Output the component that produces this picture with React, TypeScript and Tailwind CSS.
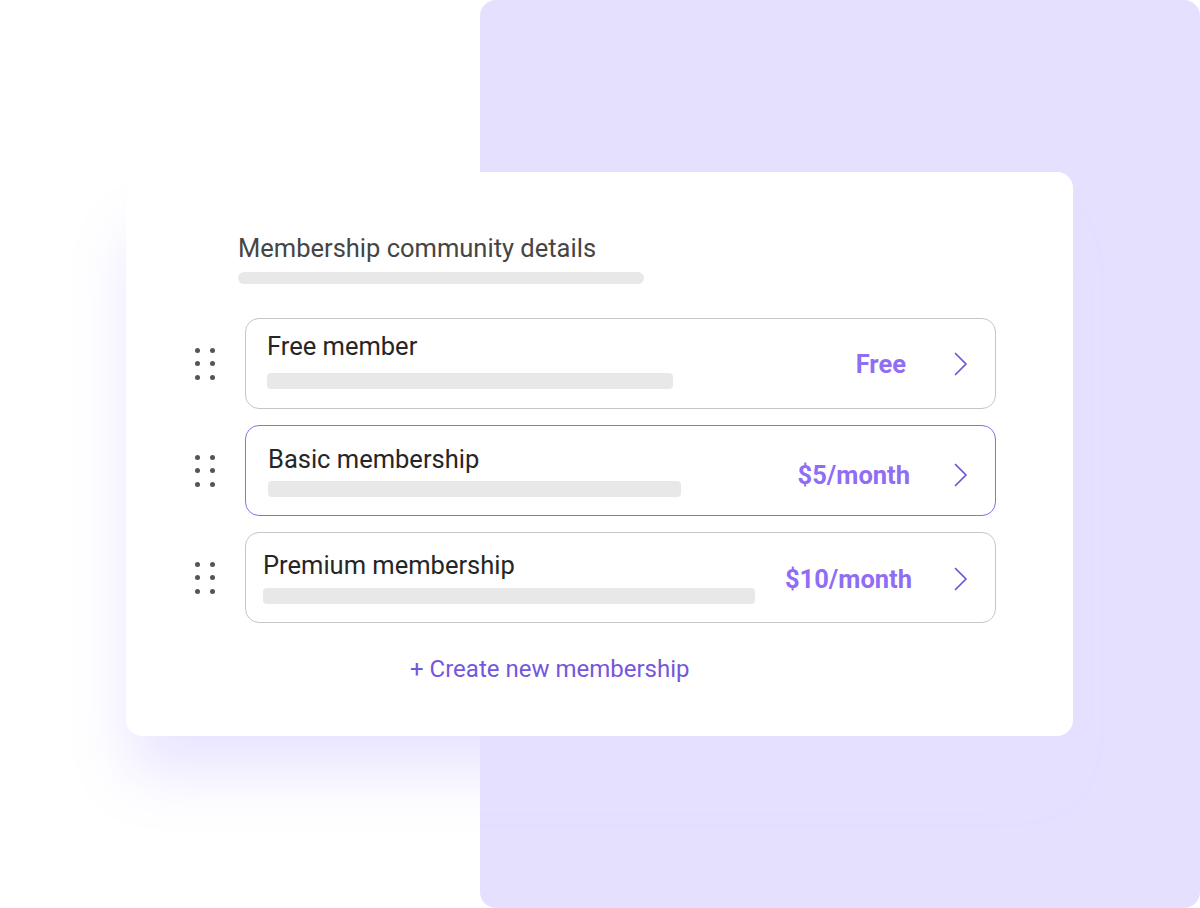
const font = { fontFamily: "Roboto, 'Noto Sans', sans-serif" };

const plans = [
  { name: "Free member", price: "Free", bar: "w-[406px]", pl: "pl-[21px]", pt: "pt-[13px]", gap: "mt-[13px]", priceMr: "mr-[48px]", priceMt: "mt-0", active: false },
  { name: "Basic membership", price: "$5/month", bar: "w-[413px]", pl: "pl-[22px]", pt: "pt-[19px]", gap: "mt-[8px]", priceMr: "mr-[44px]", priceMt: "mt-[9px]", active: true },
  { name: "Premium membership", price: "$10/month", bar: "w-[492px]", pl: "pl-[17px]", pt: "pt-[18px]", gap: "mt-[9px]", priceMr: "mr-[42px]", priceMt: "mt-[3px]", active: false },
];

function DragHandle() {
  return (
    <div className="grid grid-cols-2 gap-x-[10px] gap-y-[8.5px] w-5">
      {[0, 1, 2, 3, 4, 5].map((i) => (
        <span key={i} className="w-[5px] h-[5px] rounded-full bg-[#555555]" />
      ))}
    </div>
  );
}

function Chevron() {
  return (
    <svg width="14" height="24" viewBox="0 0 14 24" fill="none">
      <polyline points="1.5,1.5 12,12 1.5,22.5" stroke="#6f50d8" strokeWidth="1.7" strokeLinecap="round" strokeLinejoin="round" />
    </svg>
  );
}

export default function App() {
  return (
    <div className="relative w-[1200px] h-[908px] bg-white overflow-hidden" style={font}>
      <div className="ml-[480px] h-full rounded-[16px] bg-[#e6e0ff]" />

      <div className="absolute left-[126px] top-[172px] w-[947px] h-[564px] rounded-[16px] bg-white shadow-[-10px_50px_60px_-15px_rgba(230,224,255,0.9)] pt-[62px]">
        <div className="pl-[112px]">
          <h2 className="text-[25.5px] leading-[28px] text-[#454545]">Membership community details</h2>
          <div className="mt-[10px] w-[406px] h-[12px] rounded-full bg-[#e8e8e8]" />
        </div>

        <div className="mt-[34px] flex flex-col gap-4 pl-[69px]">
          {plans.map((p) => (
            <div key={p.name} className="flex items-center gap-[30px]">
              <DragHandle />
              <div
                className={`w-[751px] h-[91px] rounded-[14px] border flex items-start pr-[27px] ${p.active ? "border-[#8c6cf0]" : "border-[#c6c6c6]"}`}
              >
                <div className={`flex-1 ${p.pl} ${p.pt}`}>
                  <div className="text-[25.5px] leading-[28px] text-[#262626]">{p.name}</div>
                  <div className={`${p.gap} ${p.bar} h-[16px] rounded-[4px] bg-[#e8e8e8]`} />
                </div>
                <div className={`self-center flex items-center ${p.priceMt}`}>
                  <span className={`text-[25.5px] leading-[28px] font-bold text-[#8f6ef5] ${p.priceMr}`}>{p.price}</span>
                  <Chevron />
                </div>
              </div>
            </div>
          ))}
        </div>

        <div className="mt-[32px] pl-[284px] text-[24px] leading-[28px] text-[#7457dc]">+ Create new membership</div>
      </div>
    </div>
  );
}
